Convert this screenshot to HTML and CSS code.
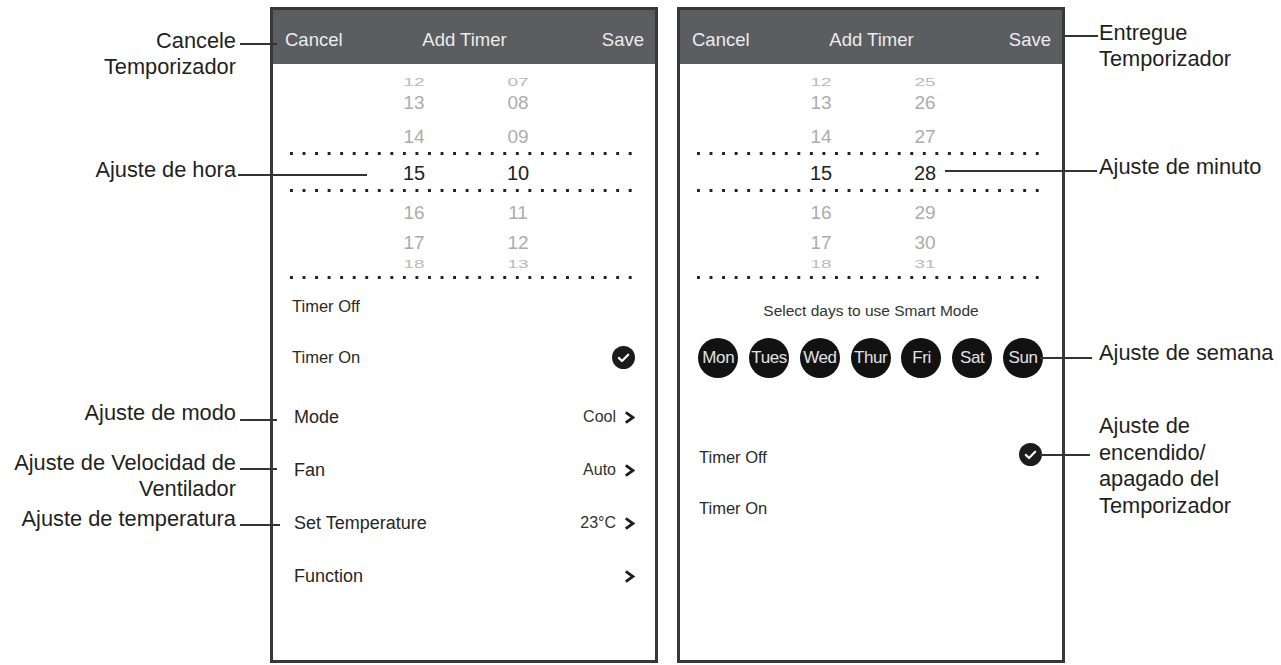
FILE: index.html
```html
<!DOCTYPE html>
<html lang="en">
  <head>
    <meta charset="UTF-8" />
    <meta name="viewport" content="width=device-width, initial-scale=1.0" />
    <title>Add Timer</title>
    <link rel="stylesheet" href="styles.css">
  </head>
  <body>
    <div class="sheet">
      <!-- labels on the left of the first screen -->
      <div class="notes notes-left">
        <p class="note note-cancel">Cancele<br />Temporizador</p>
        <p class="note note-hour">Ajuste de hora</p>
        <p class="note note-mode">Ajuste de modo</p>
        <p class="note note-fan">Ajuste de Velocidad de<br />Ventilador</p>
        <p class="note note-temp">Ajuste de temperatura</p>
      </div>

      <!-- screen 1: hour, mode, fan, temperature -->
      <div class="phone">
        <div class="topbar">
          <span>Cancel</span>
          <span class="title">Add Timer</span>
          <span class="save">Save</span>
        </div>

        <div class="wheel">
          <div class="wheel-row pos-top3"><span>12</span><span>07</span></div>
          <div class="wheel-row pos-top2"><span>13</span><span>08</span></div>
          <div class="wheel-row pos-top1"><span>14</span><span>09</span></div>
          <div class="dots dots-a"></div>
          <div class="wheel-row pos-mid"><span>15</span><span>10</span></div>
          <div class="dots dots-b"></div>
          <div class="wheel-row pos-bot1"><span>16</span><span>11</span></div>
          <div class="wheel-row pos-bot2"><span>17</span><span>12</span></div>
          <div class="wheel-row pos-bot3"><span>18</span><span>13</span></div>
          <div class="dots dots-c"></div>
        </div>

        <div class="options">
          <div class="option">Timer Off</div>
          <div class="option">
            Timer On
            <svg class="tick" viewBox="0 0 23 23"><circle cx="11.5" cy="11.5" r="11.5" /><path d="M6.8 11.9 10 15 16.2 8.7" /></svg>
          </div>
        </div>

        <div class="settings">
          <div class="setting">
            <span>Mode</span>
            <span class="value">Cool <svg class="chev" viewBox="0 0 11 13"><path d="M1.8 1.3 9 6.5 1.8 11.7" /></svg></span>
          </div>
          <div class="setting">
            <span>Fan</span>
            <span class="value">Auto <svg class="chev" viewBox="0 0 11 13"><path d="M1.8 1.3 9 6.5 1.8 11.7" /></svg></span>
          </div>
          <div class="setting">
            <span>Set Temperature</span>
            <span class="value">23°C <svg class="chev" viewBox="0 0 11 13"><path d="M1.8 1.3 9 6.5 1.8 11.7" /></svg></span>
          </div>
          <div class="setting">
            <span>Function</span>
            <span class="value"><svg class="chev" viewBox="0 0 11 13"><path d="M1.8 1.3 9 6.5 1.8 11.7" /></svg></span>
          </div>
        </div>
      </div>

      <!-- screen 2: minute, week days, on/off -->
      <div class="phone">
        <div class="topbar">
          <span>Cancel</span>
          <span class="title">Add Timer</span>
          <span class="save">Save</span>
        </div>

        <div class="wheel">
          <div class="wheel-row pos-top3"><span>12</span><span>25</span></div>
          <div class="wheel-row pos-top2"><span>13</span><span>26</span></div>
          <div class="wheel-row pos-top1"><span>14</span><span>27</span></div>
          <div class="dots dots-a"></div>
          <div class="wheel-row pos-mid"><span>15</span><span>28</span></div>
          <div class="dots dots-b"></div>
          <div class="wheel-row pos-bot1"><span>16</span><span>29</span></div>
          <div class="wheel-row pos-bot2"><span>17</span><span>30</span></div>
          <div class="wheel-row pos-bot3"><span>18</span><span>31</span></div>
          <div class="dots dots-c"></div>
        </div>

        <p class="days-title">Select days to use Smart Mode</p>
        <div class="days">
          <span class="day">Mon</span>
          <span class="day">Tues</span>
          <span class="day">Wed</span>
          <span class="day">Thur</span>
          <span class="day">Fri</span>
          <span class="day">Sat</span>
          <span class="day">Sun</span>
        </div>

        <div class="options options-low">
          <div class="option">
            Timer Off
            <svg class="tick tick-up" viewBox="0 0 23 23"><circle cx="11.5" cy="11.5" r="11.5" /><path d="M6.8 11.9 10 15 16.2 8.7" /></svg>
          </div>
          <div class="option">Timer On</div>
        </div>
      </div>

      <!-- labels on the right of the second screen -->
      <div class="notes notes-right">
        <p class="note note-save">Entregue<br />Temporizador</p>
        <p class="note note-minute">Ajuste de minuto</p>
        <p class="note note-week">Ajuste de semana</p>
        <p class="note note-onoff">Ajuste de<br />encendido/<br />apagado del<br />Temporizador</p>
      </div>
    </div>
  </body>
</html>
```

FILE: styles.css
```css
body {
  margin: 0;
  background: #fff;
  font-family: "Liberation Sans", Arial, sans-serif;
  color: #222;
  overflow: hidden;
}
.sheet {
  display: flex;
  width: 1281px;
  height: 665px;
  padding-top: 7px;
  box-sizing: border-box;
}

/* callout labels (tops are measured from the screen's top edge) */
.notes {
  position: relative;
}
.notes-left {
  width: 270px;
}
.notes-right {
  flex: 1;
}
.note {
  position: absolute;
  margin: 0;
  font-size: 21.8px;
  line-height: 26.7px;
  color: #1f1f1f;
  white-space: nowrap;
}
.note::after {
  content: "";
  position: absolute;
  height: 2px;
  background: #333;
}
.notes-left .note {
  right: 34px;
  text-align: right;
}
.notes-left .note::after {
  left: calc(100% + 4px);
  width: 37px;
}
.notes-right .note {
  left: 34px;
}
.note-cancel { top: 20.5px; }
.note-cancel::after { top: 15px; }
.note-hour { top: 150px; }
.notes-left .note-hour::after { top: 17px; left: calc(100% + 2px); width: 129px; }
.note-mode { top: 392.6px; }
.note-mode::after { top: 19px; }
.note-fan { top: 442.6px; }
.note-fan::after { top: 18px; }
.note-temp { top: 499.3px; }
.notes-left .note-temp::after { top: 18px; width: 40px; }

.note-save { top: 12.6px; }
.note-save::after { top: 15px; right: calc(100% + 1px); width: 33px; }
.note-minute { top: 147px; }
.note-minute::after { top: 16px; right: calc(100% + 2px); width: 152px; }
.note-week { top: 332.6px; }
.note-week::after { top: 17px; right: calc(100% + 7px); width: 52px; }
.note-onoff { top: 405.9px; }
.note-onoff::after { top: 41px; right: calc(100% + 9px); width: 50px; }

/* phone screens */
.phone {
  width: 388px;
  height: 656px;
  border: 3px solid #383838;
  box-sizing: border-box;
  background: #fff;
}
.phone + .phone {
  margin-left: 19px;
}
.topbar {
  display: grid;
  grid-template-columns: 1fr auto 1fr;
  align-items: center;
  height: 54px;
  padding: 5px 11px 0 12px;
  box-sizing: border-box;
  background: #5b5d61;
  color: #ececec;
  font-size: 18.5px;
}
.topbar .save {
  text-align: right;
}

/* time wheel */
.wheel-row {
  display: flex;
  gap: 44px;
  height: 20px;
  padding-left: 111px;
  font-size: 19px;
  line-height: 20px;
  color: #acacac;
}
.wheel-row span {
  width: 60px;
  text-align: center;
}
.pos-top3 { margin-top: 7.5px; }
.pos-top2 { margin-top: 1.5px; }
.pos-top1 { margin-top: 13.7px; }
.pos-mid { margin-top: 8.3px; }
.pos-bot1 { margin-top: 10.8px; }
.pos-bot2 { margin-top: 10px; }
.pos-bot3 { margin-top: 0.5px; }
.pos-top3,
.pos-bot3 {
  transform: scaleY(0.62);
  color: #bababa;
}
.pos-mid {
  font-size: 20px;
  color: #222;
}
.dots {
  width: 342px;
  height: 3px;
  margin-left: 17px;
  background: linear-gradient(90deg, #222 3px, transparent 3px) 0 0 / 12.55px 3px repeat-x;
}
.dots-a { margin-top: 5.3px; }
.dots-b { margin-top: 6.2px; }
.dots-c { margin-top: 2px; }

/* timer on / off */
.options {
  padding-top: 2px;
}
.options-low {
  padding-top: 53.7px;
}
.option {
  display: flex;
  align-items: center;
  justify-content: space-between;
  height: 51px;
  padding: 0 20px 0 19px;
  font-size: 16.5px;
  color: #2a2a2a;
}
.tick {
  width: 23px;
  height: 23px;
}
.tick-up {
  margin-top: -5px;
}
.tick circle {
  fill: #1c1c1c;
}
.tick path {
  fill: none;
  stroke: #fff;
  stroke-width: 2.2;
  stroke-linecap: round;
  stroke-linejoin: round;
}

/* settings list */
.settings {
  margin-top: 8px;
}
.setting {
  display: flex;
  align-items: center;
  justify-content: space-between;
  height: 53px;
  padding: 0 20px 0 21px;
  font-size: 18px;
  color: #262626;
}
.value {
  display: flex;
  align-items: center;
  gap: 8px;
  font-size: 16px;
  color: #333;
}
.chev {
  width: 11px;
  height: 13px;
  fill: none;
  stroke: #1e1e1e;
  stroke-width: 2.8;
}

/* week days */
.days-title {
  margin: 21px 0 0;
  line-height: 22px;
  font-size: 15.5px;
  text-align: center;
  color: #333;
}
.days {
  display: flex;
  gap: 10.8px;
  margin-top: 16.5px;
  padding-left: 18.3px;
}
.day {
  display: flex;
  align-items: center;
  justify-content: center;
  width: 40px;
  height: 40px;
  border-radius: 50%;
  background: #121212;
  color: #e2e2e2;
  font-size: 17px;
  letter-spacing: -0.4px;
}
```
